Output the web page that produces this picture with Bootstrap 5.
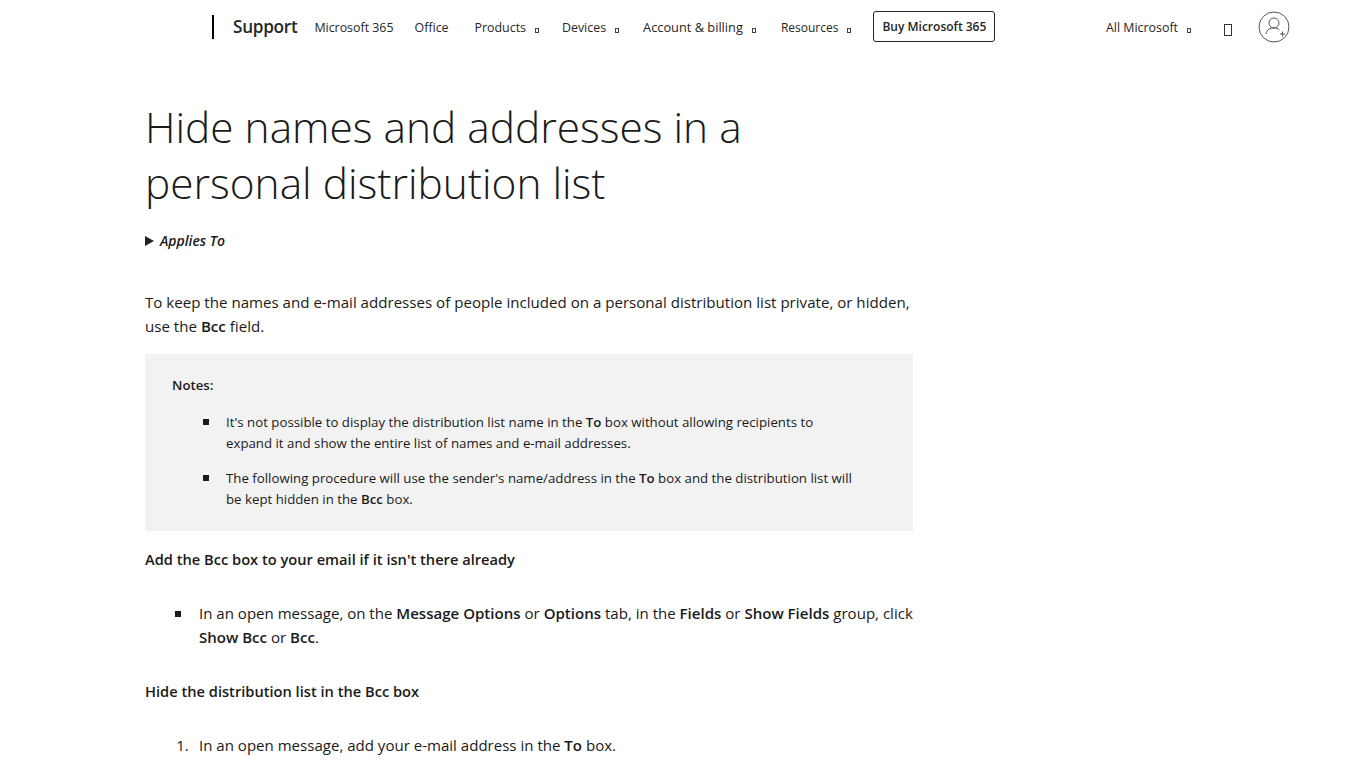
<!DOCTYPE html>
<html lang="en"><head><meta charset="utf-8"><title>Hide names and addresses in a personal distribution list</title>
<link href="https://cdn.jsdelivr.net/npm/bootstrap@5.3.0/dist/css/bootstrap.min.css" rel="stylesheet">
<style>
body{font-family:"Open Sans","Noto Sans",sans-serif;color:#1a1a1a;font-size:16px;line-height:24px;overflow:hidden;height:768px}
b{font-weight:600}
.top-bar{height:54px;padding-left:212px;padding-right:76px;white-space:nowrap}
.brand-sep{width:2px;height:24px;background:#000;margin-right:19px}
.brand-word{font-size:17.2px;font-weight:600;color:#262626;margin-right:17px;letter-spacing:-.3px}
.top-link{font-size:12.4px;color:#262626;line-height:20px;margin-right:23px;padding-top:1px}
.link-wide{margin-right:26px}
.link-near{margin-right:21px}
.link-gap{margin-right:24px}
.link-tight{font-size:12px;margin-right:22px}
.link-roomy{font-size:12.8px;margin-right:25px;padding-top:0}
.link-end{margin-right:0}
.tofu{display:inline-block;width:4px;height:5px;border:1px solid #444;margin-left:9px;vertical-align:-1px}
.tofu-lg{width:8px;height:12px;margin:6px 26px 0 33px;border-color:#333}
.buy-btn{font-size:12px;font-weight:600;color:#262626;border:1px solid #262626;border-radius:3px;padding:0 8px;height:31px;line-height:29px;margin-bottom:2px;--bs-btn-hover-color:#262626}
.page-wrap{padding:45px 0 0 145px;width:913px;box-sizing:content-box}
.page-title{font-size:42.4px;line-height:56px;font-weight:300;margin:0 0 18px;color:#1a1a1a}
.applies{font-size:14px;font-style:italic;font-weight:600;line-height:24px;margin-bottom:37px}
.tri{display:inline-block;border-left:9px solid #222;border-top:5px solid transparent;border-bottom:5px solid transparent;margin-right:6px}
.body-text{width:768px;margin:0;font-size:15.1px}
.note-box{width:768px;background:#f2f2f2;padding:20px 27px 21px;margin:16px 0 16px;font-size:13.25px;line-height:21px}
.note-box p{margin:0 0 16px;font-size:13.25px;line-height:22px}
.note-box ul,.steps{list-style:none;margin:0;padding-left:54px}
.note-box li{margin-bottom:14px;position:relative}
.note-box li:last-child{margin-bottom:0}
.note-box li::before,.square-step::before{content:"";position:absolute;width:6px;height:6px;background:#1a1a1a;left:-23px;top:7px}
.sec-head{font-weight:600;font-size:14.65px;margin:0 0 30px}
.steps{margin:0 0 30px;width:768px;font-size:15.06px}
.square-step{position:relative}
.square-step::before{top:10px;left:-24px}
.steps-num{list-style:decimal}
.steps-num li::marker{content:"1.\00a0\00a0\2009"}
</style></head><body>
<header class="top-bar d-flex align-items-center">
<span class="brand-sep"></span><span class="brand-word">Support</span>
<nav class="d-flex align-items-center">
<a class="top-link link-near text-decoration-none" href="#">Microsoft 365</a>
<a class="top-link link-wide text-decoration-none" href="#">Office</a>
<a class="top-link text-decoration-none" href="#">Products<span class="tofu"></span></a>
<a class="top-link link-gap text-decoration-none" href="#">Devices<span class="tofu"></span></a>
<a class="top-link link-roomy text-decoration-none" href="#">Account &amp; billing<span class="tofu"></span></a>
<a class="top-link link-tight text-decoration-none" href="#">Resources<span class="tofu"></span></a>
<a class="btn buy-btn" href="#">Buy Microsoft 365</a>
</nav>
<div class="d-flex align-items-center ms-auto">
<a class="top-link link-end text-decoration-none" href="#">All Microsoft<span class="tofu"></span></a>
<span class="tofu tofu-lg"></span>
<svg width="32" height="32" viewBox="0 0 32 32" fill="none" stroke="#555" stroke-width="1"><circle cx="16" cy="16" r="15"/><circle cx="16" cy="12" r="5"/><path d="M8 23c1-5 4-6 8-6 2 0 4 .5 5.500 2M22 23h5M24.500 20.500v5"/></svg>
</div>
</header>
<main class="page-wrap">
<h1 class="page-title">Hide names and addresses in a<br>personal distribution list</h1>
<div class="applies d-flex align-items-center"><span class="tri"></span>Applies To</div>
<p class="body-text">To keep the names and e-mail addresses of people included on a personal distribution list private, or hidden,<br>use the <b>Bcc</b> field.</p>
<div class="note-box">
<p><b>Notes:</b></p>
<ul>
<li>It's not possible to display the distribution list name in the <b>To</b> box without allowing recipients to<br>expand it and show the entire list of names and e-mail addresses.</li>
<li>The following procedure will use the sender's name/address in the <b>To</b> box and the distribution list will<br>be kept hidden in the <b>Bcc</b> box.</li>
</ul>
</div>
<p class="sec-head">Add the Bcc box to your email if it isn't there already</p>
<ul class="steps"><li class="square-step">In an open message, on the <b>Message Options</b> or <b>Options</b> tab, in the <b>Fields</b> or <b>Show Fields</b> group, click<br><b>Show Bcc</b> or <b>Bcc</b>.</li></ul>
<p class="sec-head">Hide the distribution list in the Bcc box</p>
<ol class="steps steps-num"><li>In an open message, add your e-mail address in the <b>To</b> box.</li></ol>
</main>
</body></html>
